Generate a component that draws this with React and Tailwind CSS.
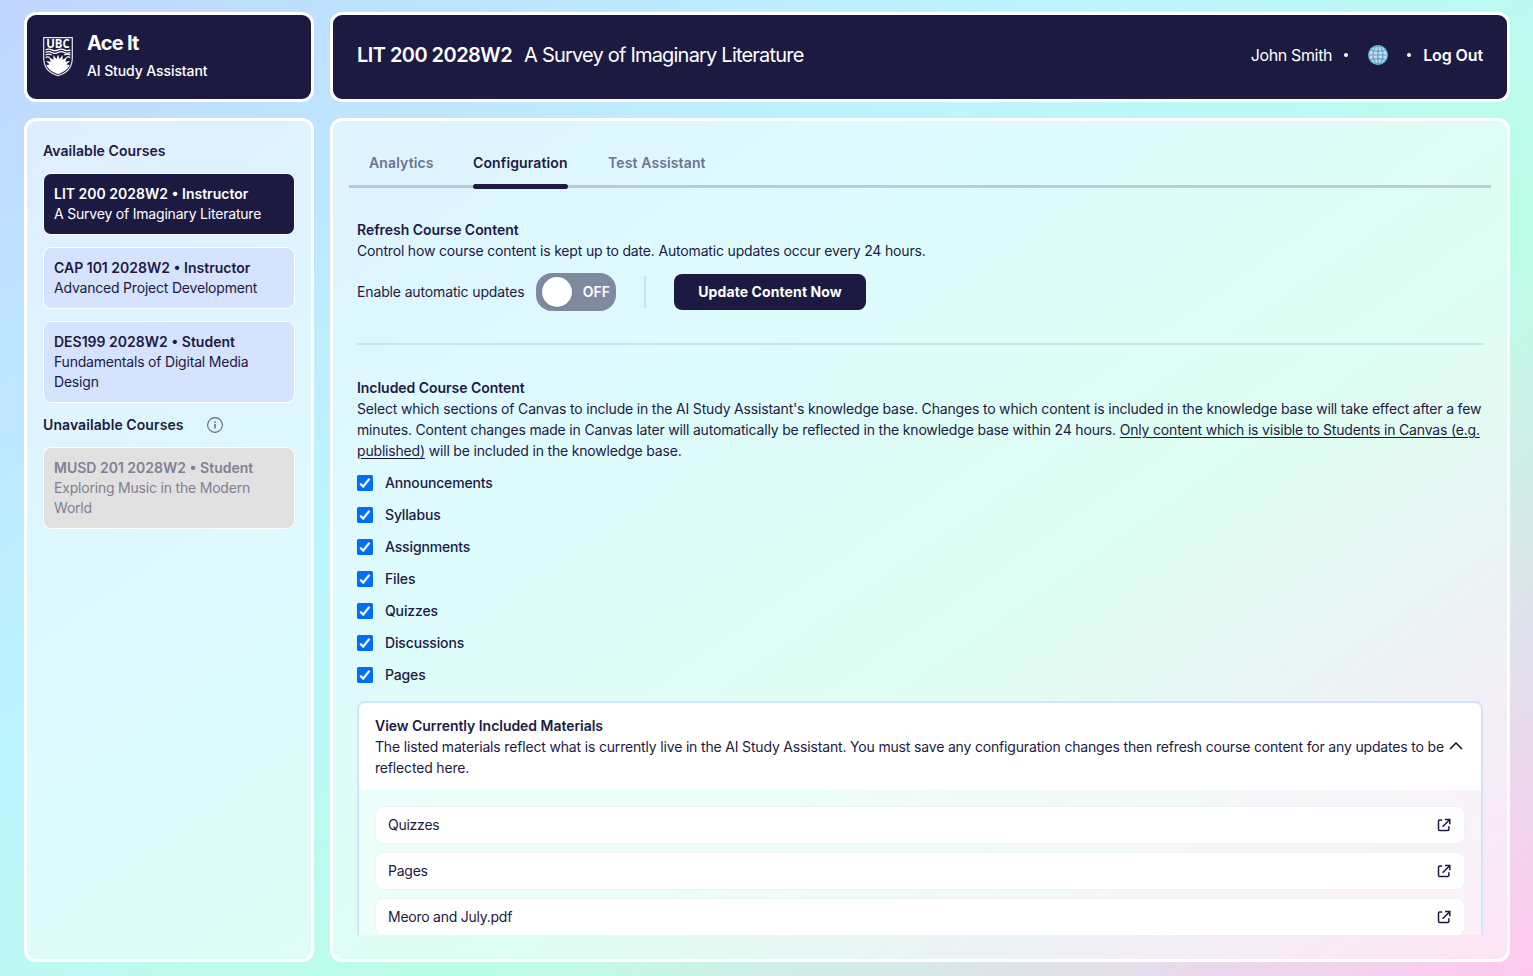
import React from "react";

const courses = [
  { code: "LIT 200 2028W2 • Instructor", title: "A Survey of Imaginary Literature", tone: "border-white bg-[#1d1a42] text-white" },
  { code: "CAP 101 2028W2 • Instructor", title: "Advanced Project Development", tone: "border-white bg-[#d5e3ff] text-[#1d1a42]" },
  { code: "DES199 2028W2 • Student", title: "Fundamentals of Digital Media Design", tone: "border-white bg-[#d5e3ff] text-[#1d1a42]" },
];

const sections = ["Announcements", "Syllabus", "Assignments", "Files", "Quizzes", "Discussions", "Pages"];
const materials = ["Quizzes", "Pages", "Meoro and July.pdf"];

function Crest() {
  return (
    <svg viewBox="0 0 30 40" className="h-10 w-[30px] shrink-0">
      <path d="M.7 .7H29.3V21C29.3 30 23.5 36.2 15 38.8C6.500 36.200 .7 30 .7 21Z" fill="#1d1a42" stroke="#e6e6ee" strokeWidth="1.2" />
      <path d="M2.600 12.900q3.100 -1.600 6.200 0t6.200 0t6.200 0t6.200 0M2.600 15.500q3.100 -1.800 6.200 0t6.200 0t6.200 0t6.200 0M2.600 18q3.100 -1.800 6.200 0M27.400 18q-3.100 -1.800 -6.200 0M2.600 20.500q2 -1.400 4 0M27.400 20.500q-2 -1.400 -4 0" fill="none" stroke="#fff" strokeWidth="1.300" />
      <path d="M15 17.500l1.500 4.500 3.200-4 -.2 4.800 4.600-2.600-2 4.500 5-.8-3.800 3.600 3.300.6C25 32 20.500 35.500 15 37.200 9.500 35.500 5 32 3.400 28.100l3.300-.6-3.800-3.600 5 .8-2-4.500 4.600 2.600-.2-4.800 3.200 4Z" fill="#fff" />
      <text x="15" y="11" textAnchor="middle" textLength="23.500" lengthAdjust="spacingAndGlyphs" fontSize="11.500" fontWeight="700" fontFamily="Open Sans, sans-serif" fill="#fff">UBC</text>
    </svg>
  );
}

function Globe() {
  return (
    <svg viewBox="0 0 20 20" className="size-5">
      <circle cx="10" cy="10" r="9.400" fill="#d3d9e4" stroke="#5bb4d6" strokeWidth="1.200" />
      <g fill="none" stroke="#4fa9cd" strokeWidth="1.200">
        <ellipse cx="10" cy="10" rx="5" ry="9.300" />
        <path d="M10 .7V19.300M.7 10H19.300M2.300 5.200Q10 7.400 17.700 5.200M2.300 14.800Q10 12.600 17.700 14.800" />
      </g>
    </svg>
  );
}

function ExternalIcon() {
  return (
    <svg viewBox="0 0 14 14" className="size-3.5 text-[#1d1a42]" fill="none" stroke="currentColor" strokeWidth="1.500">
      <path d="M5.200 2H2.700Q1.500 2 1.500 3.200V11.200Q1.500 12.400 2.700 12.400H10.700Q11.900 12.400 11.900 11.200V8.200M8 1.500H12.800V6.200M12.600 1.700L5.600 8.700" />
    </svg>
  );
}

function Course({ code, title, tone }) {
  return (
    <div className={`rounded-lg border p-2.5 text-[14px] leading-5 ${tone}`}>
      <div className="font-semibold">{code}</div>
      <div className="tracking-[-0.2px]">{title}</div>
    </div>
  );
}

function Check({ label }) {
  return (
    <label className="flex h-5 items-center gap-3 font-medium leading-5 tracking-[-0.15px]">
      <svg viewBox="0 0 16 16" className="size-4">
        <rect width="16" height="16" rx="1.500" fill="#006dff" />
        <path d="M3.200 8.600L6.200 11.500L12.500 3.700" fill="none" stroke="#fff" strokeWidth="2.200" />
      </svg>
      {label}
    </label>
  );
}

export default function App() {
  return (
    <div className="grid h-[976px] w-[1533px] grid-cols-[290px_1180px] grid-rows-[90px_844px] gap-4 overflow-hidden bg-[linear-gradient(145deg,#c0d6ff_0%,#bcf5ff_37%,#bcfee6_64%,#ffc8ee_100%)] pl-6 pt-3 font-['Inter',sans-serif] text-[14px] text-[#1d1a42]">
      <header className="flex items-start gap-3.5 rounded-xl border-3 border-white bg-[#1d1a42] px-4 text-white">
        <div className="pt-[22px]"><Crest /></div>
        <div className="pt-[13px]">
          <div className="text-[20px] font-bold leading-[30px] tracking-[-0.75px]">Ace It</div>
          <div className="mt-[3px] text-[14px] font-medium leading-5 tracking-[-0.1px]">AI Study Assistant</div>
        </div>
      </header>

      <header className="flex items-start rounded-xl border-3 border-white bg-[#1d1a42] px-6 pt-[25px] text-white">
        <div className="flex h-[30px] items-center gap-3 text-[20px]">
          <span className="font-semibold tracking-[-0.55px]">LIT 200 2028W2</span>
          <span className="tracking-[-0.8px]">A Survey of Imaginary Literature</span>
        </div>
        <div className="ml-auto flex h-[30px] items-center text-[16px]">
          <span className="tracking-[-0.36px]">John Smith</span>
          <span className="ml-3 size-1 rounded-full bg-white" />
          <span className="ml-5"><Globe /></span>
          <span className="ml-[19px] size-1 rounded-full bg-white" />
          <span className="ml-3 font-semibold tracking-[-0.1px]">Log Out</span>
        </div>
      </header>

      <aside className="rounded-xl border-3 border-white bg-white/50 px-4 pt-5">
        <h2 className="font-semibold leading-5 tracking-[0.06px]">Available Courses</h2>
        <div className="mt-3 flex flex-col gap-3">
          {courses.map((c) => <Course key={c.code} {...c} />)}
        </div>
        <div className="mt-3 flex items-center gap-[23px]">
          <h2 className="font-semibold leading-5 tracking-[0.08px]">Unavailable Courses</h2>
          <svg viewBox="0 0 16 16" className="size-4" fill="none" stroke="#5a6b88">
            <circle cx="8" cy="8" r="7.400" strokeWidth="1.100" />
            <path d="M8 7V11.600M8 4.200V5.800" strokeWidth="1.500" />
          </svg>
        </div>
        <div className="mt-3">
          <Course code="MUSD 201 2028W2 • Student" title="Exploring Music in the Modern World" tone="border-white bg-[#e1e1e1] text-[#827f93]" />
        </div>
      </aside>

      <main className="rounded-xl border-3 border-white bg-white/50 px-4 pt-5">
        <nav className="flex h-[47px] items-start gap-10 border-b-3 border-[#1d1a42]/20 px-5 pt-3 font-semibold leading-5 tracking-[0.12px] text-[#6c7390]">
          <span className="w-16">Analytics</span>
          <span className="relative w-[95px] text-[#1d1a42]">
            Configuration
            <span className="absolute -bottom-4 left-0 h-[5px] w-full rounded-full bg-[#1d1a42]" />
          </span>
          <span>Test Assistant</span>
        </nav>

        <div className="h-[747px] overflow-hidden px-2 pt-[31px] leading-[21px]">
          <section className="border-b-2 border-[#c9e3ea] pb-8">
            <h3 className="font-semibold tracking-[-0.04px]">Refresh Course Content</h3>
            <p className="tracking-[-0.17px]">Control how course content is kept up to date. Automatic updates occur every 24 hours.</p>
            <div className="mt-3 flex h-[38px] items-center leading-5">
              <span className="w-[167px] whitespace-nowrap tracking-[-0.14px]">Enable automatic updates</span>
              <span className="ml-3 flex h-[38px] w-20 items-center justify-between rounded-2xl bg-[#7f8aa1] pl-1.5 pr-1.5 font-semibold text-white">
                <span className="size-[30px] rounded-full bg-white shadow" />
                OFF
              </span>
              <span className="ml-7 h-8 w-0.5 bg-[#c9e3ea]" />
              <button className="ml-7 h-9 w-48 rounded-lg bg-[#1d1a42] font-bold leading-5 tracking-[0.1px] text-white">Update Content Now</button>
            </div>
          </section>

          <section className="pt-8">
            <h3 className="font-semibold tracking-[-0.04px]">Included Course Content</h3>
            <p className="tracking-[-0.18px]">
              Select which sections of Canvas to include in the AI Study Assistant's knowledge base. Changes to which content is included in the knowledge base will take effect after a few minutes. Content changes made in Canvas later will automatically be reflected in the knowledge base within 24 hours. <span className="underline underline-offset-2">Only content which is visible to Students in Canvas (e.g. published)</span> will be included in the knowledge base.
            </p>
            <div className="mt-3 flex flex-col gap-3">
              {sections.map((s) => <Check key={s} label={s} />)}
            </div>
          </section>

          <section className="mt-4 overflow-hidden rounded-lg border-2 border-[#d3e2ff]">
            <div className="flex h-[87px] items-center bg-white pl-4 pr-[18px]">
              <div className="w-[1075px]">
                <h3 className="font-semibold tracking-[-0.04px]">View Currently Included Materials</h3>
                <p className="tracking-[-0.17px]">The listed materials reflect what is currently live in the AI Study Assistant. You must save any configuration changes then refresh course content for any updates to be reflected here.</p>
              </div>
              <svg viewBox="0 0 14 8" className="mb-px h-2 w-3.5 shrink-0" fill="none" stroke="#111" strokeWidth="1.500"><path d="M1 7L7 1L13 7" /></svg>
            </div>
            <div className="flex flex-col gap-2 bg-white/40 px-4 py-4">
              {materials.map((m) => (
                <div key={m} className="flex h-[38px] items-center justify-between rounded-lg border border-[#edf3f6] bg-white pl-3 pr-[13px]">
                  <span className="leading-5 tracking-[-0.25px]">{m}</span>
                  <ExternalIcon />
                </div>
              ))}
            </div>
          </section>
        </div>
      </main>
    </div>
  );
}
